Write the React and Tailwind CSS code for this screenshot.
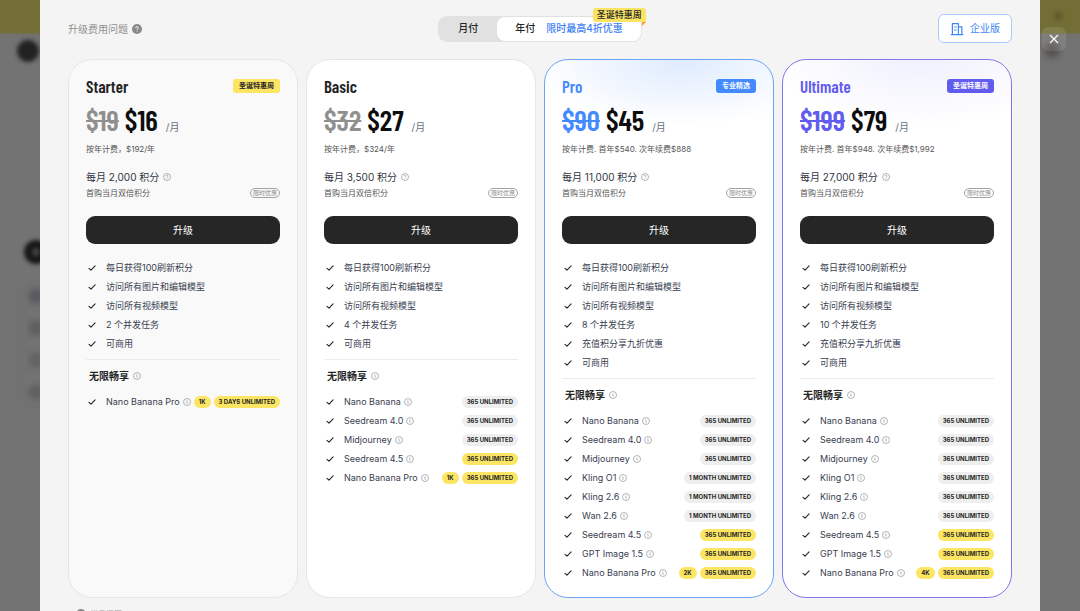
const UI_FONT = "font-['Inter','Noto_Sans_CJK_SC',sans-serif]";
const DISPLAY_FONT = "font-['Barlow_Condensed','Roboto_Condensed','Liberation_Sans_Narrow','Noto_Sans_CJK_SC',sans-serif]";

const BASE_FEATURES = ["每日获得100刷新积分", "访问所有图片和编辑模型", "访问所有视频模型"];

const YEAR = "365 UNLIMITED";
const MONTH = "1 MONTH UNLIMITED";

const TOP_MODELS = [
  { name: "Nano Banana", tag: YEAR },
  { name: "Seedream 4.0", tag: YEAR },
  { name: "Midjourney", tag: YEAR },
];

const PLANS = [
  {
    name: "Starter",
    badge: "圣诞特惠周",
    oldPrice: "$19",
    price: "$16",
    billing: "按年计费，$192/年",
    credits: "每月 2,000 积分",
    features: [...BASE_FEATURES, "2 个并发任务", "可商用"],
    models: [{ name: "Nano Banana Pro", res: "1K", tag: "3 DAYS UNLIMITED", hot: true }],
    card: "border-[#e6e6e6] bg-[#f9f9f9]",
    title: "text-[#222222]",
    old: "text-[#8f8f8f]",
    badgeStyle: "bg-[#fde564] text-[#222222]",
  },
  {
    name: "Basic",
    oldPrice: "$32",
    price: "$27",
    billing: "按年计费，$324/年",
    credits: "每月 3,500 积分",
    features: [...BASE_FEATURES, "4 个并发任务", "可商用"],
    models: [
      ...TOP_MODELS,
      { name: "Seedream 4.5", tag: YEAR, hot: true },
      { name: "Nano Banana Pro", res: "1K", tag: YEAR, hot: true },
    ],
    card: "border-[#e6e6e6] bg-white",
    title: "text-[#222222]",
    old: "text-[#8f8f8f]",
  },
  {
    name: "Pro",
    badge: "专业精选",
    oldPrice: "$90",
    price: "$45",
    billing: "按年计费. 首年$540. 次年续费$888",
    credits: "每月 11,000 积分",
    features: [...BASE_FEATURES, "8 个并发任务", "充值积分享九折优惠", "可商用"],
    models: [
      ...TOP_MODELS,
      { name: "Kling O1", tag: MONTH },
      { name: "Kling 2.6", tag: MONTH },
      { name: "Wan 2.6", tag: MONTH },
      { name: "Seedream 4.5", tag: YEAR, hot: true },
      { name: "GPT Image 1.5", tag: YEAR, hot: true },
      { name: "Nano Banana Pro", res: "2K", tag: YEAR, hot: true },
    ],
    card: "border-[#6da3f5] bg-white bg-[radial-gradient(ellipse_150px_66px_at_60%_0,#deebfe,#ffffff)]",
    title: "text-[#448aff]",
    old: "text-[#448aff]",
    badgeStyle: "bg-[#448aff] text-white",
  },
  {
    name: "Ultimate",
    badge: "圣诞特惠周",
    oldPrice: "$199",
    price: "$79",
    billing: "按年计费. 首年$948. 次年续费$1,992",
    credits: "每月 27,000 积分",
    features: [...BASE_FEATURES, "10 个并发任务", "充值积分享九折优惠", "可商用"],
    models: [
      ...TOP_MODELS,
      { name: "Kling O1", tag: YEAR },
      { name: "Kling 2.6", tag: YEAR },
      { name: "Wan 2.6", tag: YEAR },
      { name: "Seedream 4.5", tag: YEAR, hot: true },
      { name: "GPT Image 1.5", tag: YEAR, hot: true },
      { name: "Nano Banana Pro", res: "4K", tag: YEAR, hot: true },
    ],
    card: "border-[#7f78ec] bg-white bg-[radial-gradient(ellipse_150px_66px_at_60%_0,#f0f0fe,#ffffff)]",
    title: "text-[#615ced]",
    old: "text-[#615ced]",
    badgeStyle: "bg-[#615ced] text-white",
  },
];

function CheckIcon() {
  return (
    <svg viewBox="0 0 8 8" className="size-2 shrink-0" fill="none" stroke="#262626" strokeWidth="1.1" strokeLinecap="round" strokeLinejoin="round">
      <path d="M1 4.3 3 6.2 7.1 1.9" />
    </svg>
  );
}

function InfoIcon() {
  return (
    <svg viewBox="0 0 16 16" className="size-2 shrink-0" fill="none" stroke="#8c8c8c" strokeWidth="1.3">
      <circle cx="8" cy="8" r="7" />
      <path d="M6.8 7.2H8.2V11.6M8 4.2V5.6" />
    </svg>
  );
}

function QuestionIcon() {
  return (
    <svg viewBox="0 0 16 16" className="size-2 shrink-0" fill="none" stroke="#8c8c8c" strokeWidth="1.3">
      <circle cx="8" cy="8" r="7" />
      <path d="M6 6.6C6 5.3 6.9 4.6 8 4.6s2 .7 2 1.8c0 1.3-2 1.4-2 2.8M8 10.6v1.3" />
    </svg>
  );
}

function SolidQuestionIcon() {
  return (
    <svg viewBox="0 0 16 16" className="size-2.5 shrink-0" fill="none">
      <circle cx="8" cy="8" r="8" fill="#8a8a8a" />
      <path d="M5.8 6.4C5.8 5 6.8 4.2 8 4.2s2.2.8 2.2 2c0 1.5-2.2 1.6-2.2 3.2M8 10.8v1.5" stroke="#f4f4f4" strokeWidth="1.4" />
    </svg>
  );
}

function BuildingIcon() {
  return (
    <svg viewBox="0 0 14 14" className="size-3.5" fill="none" stroke="#3f86f8" strokeWidth="1.2" strokeLinejoin="round">
      <path d="M.8 12.6h12.4M2.4 12.6V1.6h6v11M8.4 4.8h3.4v7.8M4.2 5h2.4M4.2 8h2.4" />
    </svg>
  );
}

function Pill({ hot, children }) {
  return (
    <span
      className={`flex h-3 items-center rounded-full px-[5px] text-[6px] leading-3 font-bold whitespace-nowrap text-[#262626] ${
        hot ? "bg-[#fde564]" : "bg-[#eeeeee]"
      }`}
    >
      {children}
    </span>
  );
}

function PlanCard({ plan }) {
  return (
    <section className={`rounded-3xl border px-[17px] pt-4 pb-[15px] ${plan.card}`}>
      <div className="flex h-5 items-center justify-between">
        <h2 className={`text-[17px] leading-5 font-semibold ${DISPLAY_FONT} ${plan.title}`}>{plan.name}</h2>
        {plan.badge ? (
          <span className={`rounded-[3px] px-1.5 text-[7px] leading-[14px] font-bold ${plan.badgeStyle}`}>{plan.badge}</span>
        ) : null}
      </div>

      <div className="mt-[9px] flex h-[30px] items-baseline">
        <div className={`flex gap-1.5 text-[29px] leading-[30px] font-semibold ${DISPLAY_FONT}`}>
          <s className={`decoration-2 ${plan.old}`}>{plan.oldPrice}</s>
          <span className="text-[#0d0d0d]">{plan.price}</span>
        </div>
        <span className="ml-2 text-[10px] leading-3 text-[#666f7f]">/月</span>
      </div>
      <p className="mt-2 text-[8px] leading-3 text-[#555555]">{plan.billing}</p>

      <div className="mt-3.5 flex items-center gap-1 text-[10px] leading-4 text-[#303642]">
        {plan.credits}
        <QuestionIcon />
      </div>
      <div className="mt-0.5 flex h-3 items-center justify-between text-[8px] leading-3 text-[#555555]">
        首购当月双倍积分
        <span className="rounded-full border border-[#a3a3a3] px-[2px] text-[6px] leading-2 text-[#8a8a8a]">限时优惠</span>
      </div>

      <button type="button" className="mt-[17px] h-7 w-full rounded-[9px] bg-[#262626] text-[10px] text-white">
        升级
      </button>

      <ul className="mt-3.5 text-[9px] text-[#384050]">
        {plan.features.map((feature) => (
          <li key={feature} className="flex h-[19px] items-center gap-2.5 pl-0.5">
            <CheckIcon />
            {feature}
          </li>
        ))}
      </ul>

      <div className="mt-1.5 border-t border-[#ececec] pt-2">
        <h3 className="flex items-center gap-1 pl-[3px] text-[10px] leading-4 font-bold text-[#262626]">
          无限畅享
          <InfoIcon />
        </h3>
        <ul className="mt-2 text-[9px] text-[#384050]">
          {plan.models.map((model) => (
            <li key={model.name} className="flex h-[19px] items-center pl-0.5">
              <CheckIcon />
              <span className="mr-[3px] ml-2.5 whitespace-nowrap">{model.name}</span>
              <InfoIcon />
              <span className="ml-auto flex gap-[3px]">
                {model.res ? <Pill hot>{model.res}</Pill> : null}
                <Pill hot={model.hot}>{model.tag}</Pill>
              </span>
            </li>
          ))}
        </ul>
      </div>
    </section>
  );
}

function BillingToggle() {
  return (
    <div className="relative flex h-[26px] rounded-[9px] bg-[#e1e1e1] p-px text-[10px] font-medium text-[#262626]">
      <button type="button" aria-pressed="false" className="w-[58px] font-medium">
        月付
      </button>
      <button type="button" aria-pressed="true" className="flex items-center gap-[11px] rounded-lg bg-white px-[18px] font-medium">
        年付
        <span className="text-[#3f7ff5]">限时最高4折优惠</span>
      </button>
      <span className="absolute -top-2 -right-1 rounded-[3px] rounded-br-none bg-[#fae365] px-1 text-[9px] leading-[14px] font-medium">
        圣诞特惠周
        <svg viewBox="0 0 4 4" className="absolute top-full right-0 size-1">
          <path d="M0 0h4L0 4Z" fill="#f0a040" />
        </svg>
      </span>
    </div>
  );
}

// Dimmed page that shows at both sides of the dialog
function Backdrop() {
  return (
    <div className="absolute inset-0 overflow-hidden bg-[#737373]">
      <div className="h-[33px] bg-[#736e36] shadow-[0_0_4px_#736e36]" />
      <div className="absolute top-10 left-[17px] size-[22px] rounded-full bg-[#222222] blur-[2px]" />
      <div className="absolute top-60 left-6 size-6 rounded-full border-8 border-[#161616] bg-[#444444] blur-[2px]" />
      <div className="absolute top-[280px] left-5 flex w-20 flex-col gap-[18px] rounded-xl border border-[#6b6b6b] py-2 pl-2 blur-[3px]">
        <i className="size-[14px] rounded-sm bg-[#55585e]" />
        <i className="size-[14px] rounded-sm border-2 border-[#5a5a5a] bg-[#606060]" />
        <i className="size-[14px] rounded-sm border-2 border-[#5f5f5f] bg-[#646464]" />
        <i className="size-[14px] rounded-full border-2 border-[#565656] bg-[#606060]" />
      </div>
      <div className="absolute top-3 right-[18px] size-2 rounded-full bg-[#5c582d] blur-[2px]" />
      <div className="absolute top-[42px] right-5 size-4 rounded-full bg-[#55504d] blur-[3px]" />
    </div>
  );
}

export default function App() {
  return (
    <div className={`relative h-screen overflow-hidden ${UI_FONT}`}>
      <Backdrop />
      <main role="dialog" aria-label="升级" className="relative mx-10 h-full overflow-hidden bg-[#f4f4f4] px-7">
        <header className="grid h-[59px] grid-cols-[1fr_auto_1fr] items-center pb-0.5">
          <a href="#faq" className="flex items-center gap-1 text-[10px] leading-4 text-[#8f8f8f]">
            升级费用问题
            <SolidQuestionIcon />
          </a>
          <BillingToggle />
          <button
            type="button"
            className="flex h-[29px] items-center gap-1.5 justify-self-end rounded-md border border-[#a9c9fb] bg-white px-[11px] text-[10px] text-[#3f86f8]"
          >
            <BuildingIcon />
            企业版
          </button>
        </header>

        <div className="grid grid-cols-4 gap-2">
          {PLANS.map((plan) => (
            <PlanCard key={plan.name} plan={plan} />
          ))}
        </div>

        <footer id="faq" className="mt-2.5 flex items-center gap-1 pl-2 text-[8px] leading-3 text-[#a3a3a3]">
          <SolidQuestionIcon />
          常见问题
        </footer>
      </main>

      <button
        type="button"
        aria-label="关闭"
        className="absolute top-[27px] right-3.5 flex size-6 items-center justify-center rounded-md bg-white/10"
      >
        <svg viewBox="0 0 10 10" className="size-2.5" stroke="#ffffff" strokeWidth="1.1">
          <path d="M1 1l8 8M9 1 1 9" />
        </svg>
      </button>
    </div>
  );
}
